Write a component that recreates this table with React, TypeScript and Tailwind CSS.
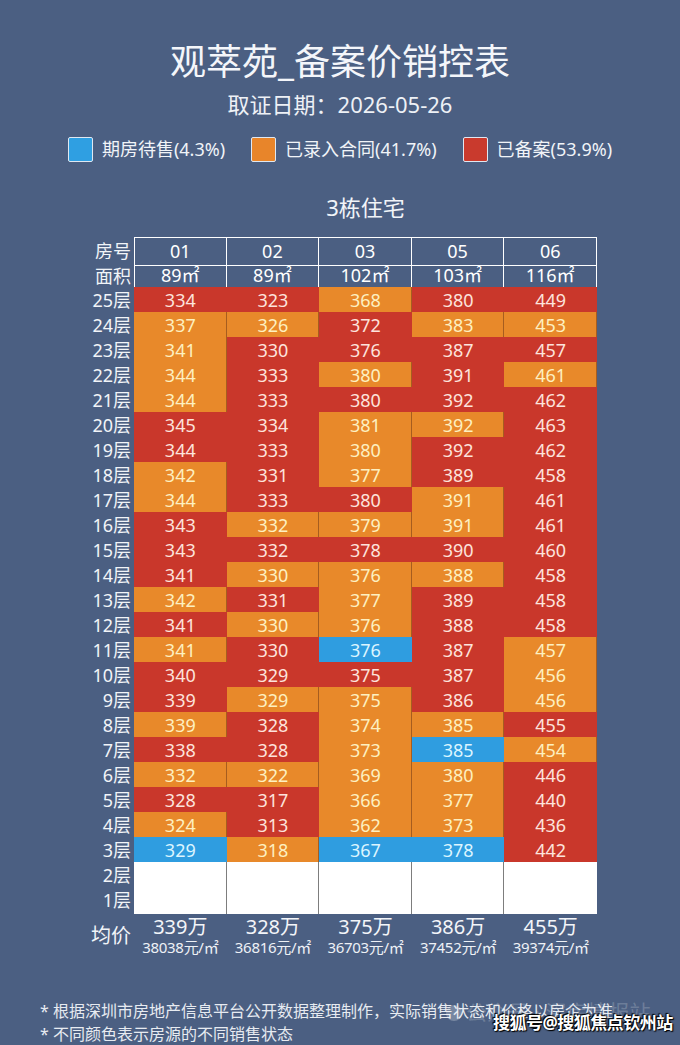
import React from 'react';

type Status = 'R' | 'O' | 'B';

// floor -> five units (01, 02, 03, 05, 06), price in 万 + status letter
const floorData: [number, string][] = [
  [25, '334R 323R 368O 380R 449R'],
  [24, '337O 326O 372R 383O 453O'],
  [23, '341O 330R 376R 387R 457R'],
  [22, '344O 333R 380O 391R 461O'],
  [21, '344O 333R 380R 392R 462R'],
  [20, '345R 334R 381O 392O 463R'],
  [19, '344R 333R 380O 392R 462R'],
  [18, '342O 331R 377O 389R 458R'],
  [17, '344O 333R 380R 391O 461R'],
  [16, '343R 332O 379O 391O 461R'],
  [15, '343R 332R 378R 390R 460R'],
  [14, '341R 330O 376O 388O 458R'],
  [13, '342O 331R 377O 389R 458R'],
  [12, '341R 330O 376O 388R 458R'],
  [11, '341O 330R 376B 387R 457O'],
  [10, '340R 329R 375R 387R 456O'],
  [9, '339R 329O 375O 386R 456O'],
  [8, '339O 328R 374O 385O 455R'],
  [7, '338R 328R 373O 385B 454O'],
  [6, '332O 322O 369O 380O 446R'],
  [5, '328R 317R 366O 377O 440R'],
  [4, '324O 313R 362O 373O 436R'],
  [3, '329B 318O 367B 378B 442R'],
];

const units = ['01', '02', '03', '05', '06'];
const areas = ['89㎡', '89㎡', '102㎡', '103㎡', '116㎡'];
const avgTotal = ['339万', '328万', '375万', '386万', '455万'];
const avgUnit = ['38038元/㎡', '36816元/㎡', '36703元/㎡', '37452元/㎡', '39374元/㎡'];

const cellClass: Record<Status, string> = {
  R: 'bg-[#c9372b] text-[#fde3dc]',
  O: 'bg-[#e8892a] text-[#fdf0c0] shadow-[inset_-1px_-1px_0_#a65d1f]',
  B: 'bg-[#2f9de0] text-[#dcf5ff]',
};

const legend = [
  { color: 'bg-[#2f9fe2]', label: '期房待售(4.3%)' },
  { color: 'bg-[#e8852a]', label: '已录入合同(41.7%)' },
  { color: 'bg-[#c93a2d]', label: '已备案(53.9%)' },
];

const gridCols = 'grid grid-cols-[54px_repeat(5,92.6px)]';

function RowLabel({ children, className }: { children: React.ReactNode; className?: string }) {
  return (
    <div className={'flex items-center justify-end pr-[3px] text-[18px] text-[#f1f4f8] ' + (className ?? '')}>
      {children}
    </div>
  );
}

export default function App() {
  return (
    <div className="relative w-[680px] h-[1045px] overflow-hidden bg-[#4b5f82] font-['Noto_Sans','Noto_Sans_CJK_SC',sans-serif] text-white">
      {/* Title */}
      <div className="pt-[39px] text-center text-[36px] leading-[46px] text-[#f4f6fa]">观萃苑_备案价销控表</div>
      <div className="mt-[4px] text-center text-[22px] leading-[30px] text-[#eef1f6]">取证日期：2026-05-26</div>

      {/* Legend */}
      <div className="mt-[17px] flex justify-center items-center gap-[26px]">
        {legend.map((l) => (
          <div key={l.label} className="flex items-center gap-[9px]">
            <span className={'w-[25px] h-[25px] rounded-[2px] border border-[#dfe8f2] ' + l.color} />
            <span className="text-[18px] leading-[26px] text-[#f1f4f8]">{l.label}</span>
          </div>
        ))}
      </div>

      {/* Building name */}
      <div className="mt-[30px] ml-[134px] w-[463px] text-center text-[22px] leading-[30px] text-[#f1f4f8]">3栋住宅</div>

      {/* Table */}
      <div className="mt-[15px] ml-[80px]">
        <div className={gridCols + ' h-[25px]'}>
          <RowLabel>房号</RowLabel>
          {units.map((u, i) => (
            <div
              key={u}
              className={
                'flex items-center justify-center text-[18px] border-t border-r border-b border-white ' +
                (i === 0 ? 'border-l' : '')
              }
            >
              {u}
            </div>
          ))}
        </div>
        <div className={gridCols + ' h-[25px]'}>
          <RowLabel>面积</RowLabel>
          {areas.map((a, i) => (
            <div
              key={i}
              className={
                'flex items-center justify-center text-[18px] border-r border-b border-white ' +
                (i === 0 ? 'border-l' : '')
              }
            >
              {a}
            </div>
          ))}
        </div>

        {floorData.map(([floor, line]) => (
          <div key={floor} className={gridCols + ' h-[25px]'}>
            <RowLabel>{floor}层</RowLabel>
            {line.split(' ').map((c, i) => {
              const status = c.slice(-1) as Status;
              return (
                <div key={i} className={'flex items-center justify-center text-[18px] ' + cellClass[status]}>
                  {c.slice(0, -1)}
                </div>
              );
            })}
          </div>
        ))}

        {[2, 1].map((floor) => (
          <div key={floor} className={gridCols + ' h-[25px]'}>
            <RowLabel>{floor}层</RowLabel>
            {units.map((u, i) => (
              <div
                key={u}
                className={
                  'bg-white border-[#7d7d7d] ' +
                  (i < 4 ? 'border-r ' : '') +
                  (floor === 2 ? 'border-b' : '')
                }
              />
            ))}
          </div>
        ))}

        {/* Average price */}
        <div className={gridCols + ' mt-[4px]'}>
          <RowLabel className="text-[20px]">均价</RowLabel>
          {avgTotal.map((t, i) => (
            <div key={t} className="flex flex-col items-center">
              <span className="text-[20px] leading-[22px] text-[#f3f5f9]">{t}</span>
              <span className="text-[15px] leading-[18px] tracking-[-0.3px] text-[#eef1f6] whitespace-nowrap">
                {avgUnit[i]}
              </span>
            </div>
          ))}
        </div>
      </div>

      {/* Notes */}
      <div className="mt-[44px] ml-[40px] text-[16px] leading-[23px] text-[#e7ebf1]">
        <p>* 根据深圳市房地产信息平台公开数据整理制作，实际销售状态和价格以房企为准</p>
        <p>* 不同颜色表示房源的不同销售状态</p>
      </div>

      {/* Watermarks */}
      <div className="absolute left-[446px] top-[997px] flex items-center gap-[4px] text-[21px] text-white/20">
        <span className="w-[16px] h-[16px] rounded-full bg-white/25" />
        <span>公众号 · 深房情报站</span>
      </div>
      <div className="absolute left-[493px] top-[1010px] text-[17px] font-bold tracking-[-0.5px] text-white [text-shadow:0_0_2px_#000,1px_1px_1px_#000,-1px_-1px_1px_#000]">
        搜狐号@搜狐焦点钦州站
      </div>
    </div>
  );
}
